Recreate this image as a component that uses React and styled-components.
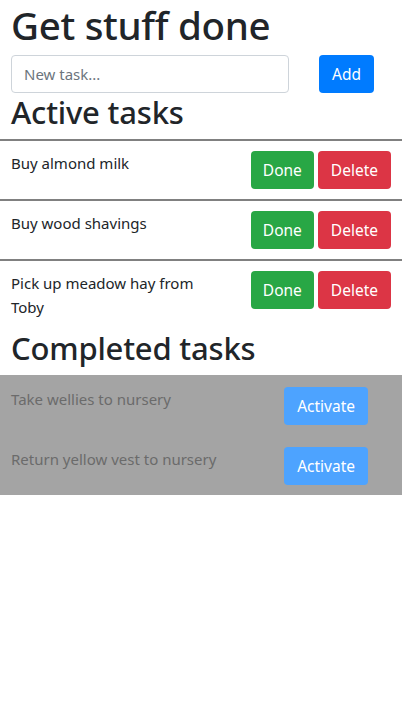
import styled, { createGlobalStyle } from "styled-components";

const GlobalStyle = createGlobalStyle`
  html, body {
    margin: 0;
    padding: 0;
    background: #fff;
  }
  body {
    font-family: "Noto Sans", "Open Sans", sans-serif;
    font-size: 16px;
    line-height: 1.5;
    color: #212529;
  }
  * {
    box-sizing: border-box;
  }
`;

const Page = styled.div`
  width: 402px;
`;

const Inner = styled.div`
  padding: 0 11px;
`;

const Title = styled.h1`
  margin: 0;
  padding-top: 2px;
  font-size: 38.5px;
  font-weight: 500;
  line-height: 46px;
  letter-spacing: -0.3px;
`;

const NewTaskForm = styled.form`
  display: flex;
  align-items: center;
  gap: 30px;
  margin-top: 7px;
`;

const TaskInput = styled.input`
  width: 278px;
  height: 38px;
  padding: 6px 12px;
  font-family: inherit;
  font-size: 15px;
  color: #495057;
  border: 1px solid #ced4da;
  border-radius: 4px;
  outline: none;

  &::placeholder {
    color: #6c757d;
  }
`;

const Button = styled.button`
  height: 38px;
  padding: 0 ${(props) => props.$pad || 12}px;
  font-family: inherit;
  font-size: 15.5px;
  color: #fff;
  border: none;
  border-radius: 4px;
  background: ${(props) => props.$color};
  cursor: pointer;
`;

const SectionTitle = styled.h2`
  margin: 0;
  font-size: 31px;
  font-weight: 500;
  line-height: 38px;
  padding: 0 11px;
  letter-spacing: -0.2px;
`;

const List = styled.div`
  margin-top: ${(props) => props.$top || 0}px;
  background: ${(props) => props.$muted ? "#a4a4a4" : "transparent"};
`;

const Row = styled.div`
  display: flex;
  align-items: flex-start;
  justify-content: space-between;
  border-top: 2px solid ${(props) => props.$muted ? "#a4a4a4" : "#808080"};
  padding: 10px 11px;
  min-height: 60px;
`;

const TaskText = styled.div`
  width: ${(props) => props.$wide ? "260px" : "200px"};
  font-size: 15px;
  line-height: 24px;
  color: ${(props) => props.$muted ? "#6b6b6b" : "#212529"};
`;

const Actions = styled.div`
  display: flex;
  gap: 4px;
  margin-right: ${(props) => props.$offset || 0}px;
`;

const active = ["Buy almond milk", "Buy wood shavings", "Pick up meadow hay from Toby"];
const completed = ["Take wellies to nursery", "Return yellow vest to nursery"];

export default function App() {
  return (
    <Page>
      <GlobalStyle />
      <Inner>
        <Title>Get stuff done</Title>
        <NewTaskForm onSubmit={(e) => e.preventDefault()}>
          <TaskInput placeholder="New task..." />
          <Button $color="#007bff" $pad={13}>Add</Button>
        </NewTaskForm>
      </Inner>
      <SectionTitle>Active tasks</SectionTitle>
      <List $top={8}>
        {active.map((t) => (
          <Row key={t}>
            <TaskText>{t}</TaskText>
            <Actions>
              <Button $color="#28a745" $pad={12}>Done</Button>
              <Button $color="#dc3545" $pad={13}>Delete</Button>
            </Actions>
          </Row>
        ))}
      </List>
      <SectionTitle>Completed tasks</SectionTitle>
      <List $muted $top={8}>
        {completed.map((t) => (
          <Row key={t} $muted>
            <TaskText $muted $wide>{t}</TaskText>
            <Actions $offset={23}>
              <Button $color="#4da3ff" $pad={13}>Activate</Button>
            </Actions>
          </Row>
        ))}
      </List>
    </Page>
  );
}
